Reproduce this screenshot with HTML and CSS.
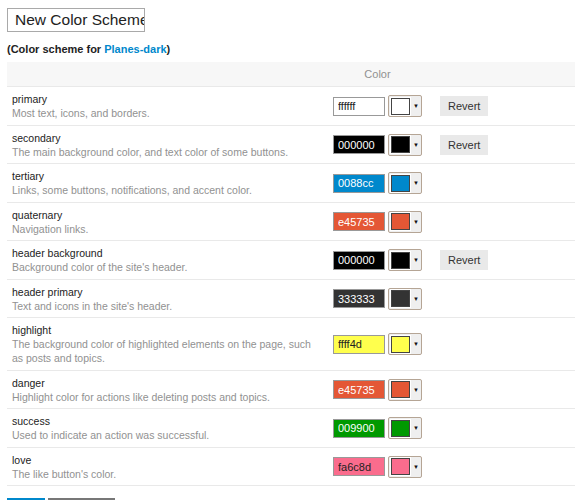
FILE: index.html
```html
<!DOCTYPE html>
<html>
<head>
    <title>Color Scheme</title>
    <link rel="stylesheet" href="styles.css">
</head>
<body>
    <div class="scheme-editor">
        <input type="text" class="scheme-name" value="New Color Scheme">
        <p class="scheme-base">(Color scheme for <a href="#">Planes-dark</a>)</p>

        <table class="colors">
            <thead>
                <tr>
                    <th class="col-name"></th>
                    <th class="col-color">Color</th>
                    <th class="col-revert"></th>
                </tr>
            </thead>
            <tbody>
                <tr>
                    <td class="col-name"><div class="name">primary</div><div class="desc">Most text, icons, and borders.</div></td>
                    <td class="col-color"><div class="picker"><input class="hex" value="ffffff" style="background:#ffffff;color:#222"><span class="swatch"><span class="chip" style="background:#ffffff"></span><span class="arrow">&#9660;</span></span></div></td>
                    <td class="col-revert"><button class="revert">Revert</button></td>
                </tr>
                <tr>
                    <td class="col-name"><div class="name">secondary</div><div class="desc">The main background color, and text color of some buttons.</div></td>
                    <td class="col-color"><div class="picker"><input class="hex" value="000000" style="background:#000000;color:#fff"><span class="swatch"><span class="chip" style="background:#000000"></span><span class="arrow">&#9660;</span></span></div></td>
                    <td class="col-revert"><button class="revert">Revert</button></td>
                </tr>
                <tr>
                    <td class="col-name"><div class="name">tertiary</div><div class="desc">Links, some buttons, notifications, and accent color.</div></td>
                    <td class="col-color"><div class="picker"><input class="hex" value="0088cc" style="background:#0088cc;color:#fff"><span class="swatch"><span class="chip" style="background:#0088cc"></span><span class="arrow">&#9660;</span></span></div></td>
                    <td class="col-revert"></td>
                </tr>
                <tr>
                    <td class="col-name"><div class="name">quaternary</div><div class="desc">Navigation links.</div></td>
                    <td class="col-color"><div class="picker"><input class="hex" value="e45735" style="background:#e45735;color:#fff"><span class="swatch"><span class="chip" style="background:#e45735"></span><span class="arrow">&#9660;</span></span></div></td>
                    <td class="col-revert"></td>
                </tr>
                <tr>
                    <td class="col-name"><div class="name">header background</div><div class="desc">Background color of the site's header.</div></td>
                    <td class="col-color"><div class="picker"><input class="hex" value="000000" style="background:#000000;color:#fff"><span class="swatch"><span class="chip" style="background:#000000"></span><span class="arrow">&#9660;</span></span></div></td>
                    <td class="col-revert"><button class="revert">Revert</button></td>
                </tr>
                <tr>
                    <td class="col-name"><div class="name">header primary</div><div class="desc">Text and icons in the site's header.</div></td>
                    <td class="col-color"><div class="picker"><input class="hex" value="333333" style="background:#333333;color:#fff"><span class="swatch"><span class="chip" style="background:#333333"></span><span class="arrow">&#9660;</span></span></div></td>
                    <td class="col-revert"></td>
                </tr>
                <tr>
                    <td class="col-name"><div class="name">highlight</div><div class="desc">The background color of highlighted elements on the page, such as posts and topics.</div></td>
                    <td class="col-color"><div class="picker"><input class="hex" value="ffff4d" style="background:#ffff4d;color:#222"><span class="swatch"><span class="chip" style="background:#ffff4d"></span><span class="arrow">&#9660;</span></span></div></td>
                    <td class="col-revert"></td>
                </tr>
                <tr>
                    <td class="col-name"><div class="name">danger</div><div class="desc">Highlight color for actions like deleting posts and topics.</div></td>
                    <td class="col-color"><div class="picker"><input class="hex" value="e45735" style="background:#e45735;color:#fff"><span class="swatch"><span class="chip" style="background:#e45735"></span><span class="arrow">&#9660;</span></span></div></td>
                    <td class="col-revert"></td>
                </tr>
                <tr>
                    <td class="col-name"><div class="name">success</div><div class="desc">Used to indicate an action was successful.</div></td>
                    <td class="col-color"><div class="picker"><input class="hex" value="009900" style="background:#009900;color:#fff"><span class="swatch"><span class="chip" style="background:#009900"></span><span class="arrow">&#9660;</span></span></div></td>
                    <td class="col-revert"></td>
                </tr>
                <tr>
                    <td class="col-name"><div class="name">love</div><div class="desc">The like button's color.</div></td>
                    <td class="col-color"><div class="picker"><input class="hex" value="fa6c8d" style="background:#fa6c8d;color:#222"><span class="swatch"><span class="chip" style="background:#fa6c8d"></span><span class="arrow">&#9660;</span></span></div></td>
                    <td class="col-revert"></td>
                </tr>
            </tbody>
        </table>

        <div class="actions">
            <button class="btn-save">Save</button>
            <button class="btn-copy">Copy</button>
        </div>
    </div>
</body>
</html>
```

FILE: styles.css
```css
body {
    font-family: "Liberation Sans", Arial, sans-serif;
    margin: 8px 0 0 7px;
    color: #222;
    background-color: #fff;
}

.scheme-name {
    width: 138px;
    height: 24px;
    box-sizing: border-box;
    padding: 0 0 0 7px;
    font-family: "Liberation Sans", Arial, sans-serif;
    font-size: 15.5px;
    color: #222;
    border: 1px solid #a9a9a9;
    margin: 0;
}

.scheme-base {
    font-size: 11px;
    font-weight: bold;
    margin: 11px 0 6px;
    line-height: 13px;
}

.scheme-base a {
    color: #0088cc;
    text-decoration: none;
}

.colors {
    width: 568px;
    border-collapse: collapse;
}

.colors th {
    background-color: #f7f7f7;
    color: #919191;
    font-weight: normal;
    font-size: 11px;
    height: 24px;
    padding: 0;
    border-bottom: 1px solid #e9e9e9;
}

.colors td {
    border-bottom: 1px solid #e9e9e9;
    padding: 5px 5px 4.5px;
    vertical-align: middle;
}

.colors td.col-color {
    padding-left: 8px;
}

.col-name {
    width: 308px;
}

.col-color {
    width: 92px;
}

.name {
    font-size: 10.5px;
    line-height: 14px;
    color: #222;
}

.desc {
    font-size: 10.5px;
    line-height: 14px;
    color: #919191;
}

.picker {
    display: flex;
    align-items: center;
    gap: 3px;
}

.hex {
    width: 52px;
    height: 19px;
    box-sizing: border-box;
    border: 1px solid #999;
    padding: 0 4px;
    font-family: "Liberation Sans", Arial, sans-serif;
    font-size: 11px;
    margin: 0;
}

.swatch {
    display: flex;
    align-items: center;
    width: 34px;
    height: 22px;
    box-sizing: border-box;
    border: 1px solid #b5a595;
    border-radius: 2px;
    background-color: #efefef;
}

.chip {
    width: 19px;
    height: 17px;
    box-sizing: border-box;
    border: 1px solid #444;
    margin-left: 2px;
    outline: 1px solid #fff;
}

.arrow {
    font-size: 6px;
    margin-left: 3px;
    color: #111;
}

.revert {
    font-family: "Liberation Sans", Arial, sans-serif;
    font-size: 11px;
    color: #333;
    background-color: #e9e9e9;
    border: none;
    height: 20px;
    padding: 0 8px;
    margin-left: 5px;
}

.actions {
    margin-top: 12px;
    display: flex;
    gap: 3px;
}

.btn-save {
    width: 38px;
    height: 28px;
    background-color: #0088cc;
    color: #fff;
    border: none;
}

.btn-copy {
    width: 67px;
    height: 28px;
    background-color: #777;
    color: #fff;
    border: none;
}
```
